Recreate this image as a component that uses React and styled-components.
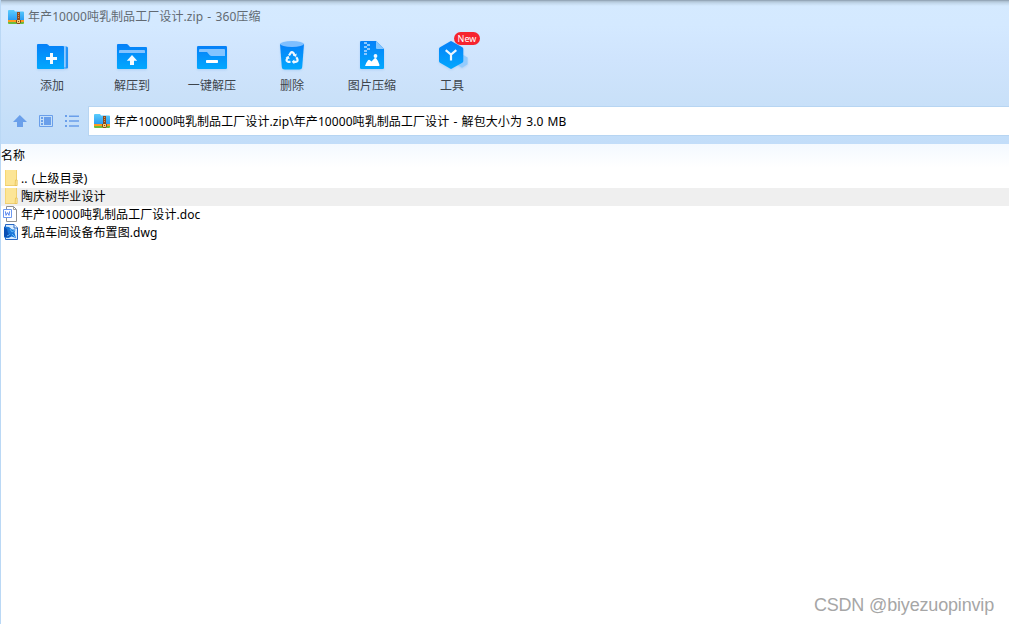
import React from "react";
import styled, { createGlobalStyle } from "styled-components";

const tools = [
  { label: "添加", icon: AddIcon },
  { label: "解压到", icon: ExtractIcon },
  { label: "一键解压", icon: QuickExtractIcon },
  { label: "删除", icon: TrashIcon },
  { label: "图片压缩", icon: ImageZipIcon },
  { label: "工具", icon: CubeIcon, badge: "New" },
];

const files = [
  { name: ".. (上级目录)", icon: FolderIcon },
  { name: "陶庆树毕业设计", icon: FolderIcon, active: true },
  { name: "年产10000吨乳制品工厂设计.doc", icon: DocIcon },
  { name: "乳品车间设备布置图.dwg", icon: DwgIcon },
];

const App = () => {
  return (
    <Window>
      <GlobalStyle />
      <Gradients />
      <Header>
        <TitleBar>
          <ArchiveIcon />
          <span>年产10000吨乳制品工厂设计.zip - 360压缩</span>
        </TitleBar>
        <Toolbar>
          {tools.map(({ label, icon: Icon, badge }) => (
            <Tool key={label}>
              <Icon />
              <span>{label}</span>
              {badge && <Badge>{badge}</Badge>}
            </Tool>
          ))}
        </Toolbar>
        <AddressBar>
          <NavButtons>
            <UpIcon />
            <PreviewIcon />
            <ListIcon />
          </NavButtons>
          <Address>
            <ArchiveIcon />
            <AddressText>
              年产10000吨乳制品工厂设计.zip\年产10000吨乳制品工厂设计 -
              解包大小为 3.0 MB
            </AddressText>
          </Address>
        </AddressBar>
      </Header>
      <ColumnHeader>名称</ColumnHeader>
      <FileList>
        {files.map(({ name, icon: Icon, active }) => (
          <FileRow key={name} $active={active}>
            <Icon />
            <span>{name}</span>
          </FileRow>
        ))}
      </FileList>
      <Watermark>CSDN @biyezuopinvip</Watermark>
    </Window>
  );
};

function Gradients() {
  return (
    <HiddenSvg width="0" height="0">
      <defs>
        <linearGradient id="blue" x1="0" y1="0" x2="0" y2="1">
          <stop offset="0" stopColor="#0680f8" />
          <stop offset="1" stopColor="#02a8fe" />
        </linearGradient>
        <linearGradient id="sky" x1="0" y1="0" x2="0" y2="1">
          <stop offset="0" stopColor="#5accfc" />
          <stop offset="1" stopColor="#2b9cf2" />
        </linearGradient>
      </defs>
    </HiddenSvg>
  );
}

function ArchiveIcon() {
  return (
    <svg width="16" height="16" viewBox="0 0 16 16">
      <path d="M0 2q0-1 1-1h5l1 1.5h8q1 0 1 1V11H0z" fill="url(#sky)" />
      <path d="M0 11h16v2H0z" fill="#ff9a1e" />
      <path d="M0 13h16v1q0 1-1 1H1q-1 0-1-1z" fill="#6cbb3c" />
      <path d="M9 3h3v12H9z" fill="#8c4a22" />
      <path d="M10 4h1v1h-1zM10 6h1v1h-1zM10 8h1v1h-1z" fill="#d99a4e" />
      <path d="M8 11h5v3H8z" fill="#8a4919" />
      <path d="M9 11h3v3H9z" fill="#f3cf72" />
      <path d="M10 12h1v1h-1z" fill="#8a4919" />
    </svg>
  );
}

function AddIcon() {
  return (
    <ToolSvg viewBox="0 0 32 32">
      <path d="M28 6.5h2.5Q32 6.5 32 8v19.5q0 1-1 1h-3z" fill="#2393f7" />
      <path d="M27 6h2.8v21.5H27z" fill="#91caff" />
      <path
        d="M1 5q0-1 1-1h8.6q.7 0 1.2.6L13.4 6H27q1 0 1 1v22H2q-1 0-1-1z"
        fill="url(#blue)"
      />
      <path d="M14 13h3v4h4v3h-4v4h-3v-4h-4v-3h4z" fill="#f6fbff" />
    </ToolSvg>
  );
}

function ExtractIcon() {
  return (
    <ToolSvg viewBox="0 0 32 32">
      <path
        d="M1 5q0-1 1-1h8.6q.7 0 1.2.6L14 7h16q1 0 1 1v20q0 1-1 1H2q-1 0-1-1z"
        fill="url(#blue)"
      />
      <path d="M3 13v-2q0-1 1-1h24q1 0 1 1v2z" fill="#84c3ff" />
      <path d="M16 15l5.2 5.7H18V25h-4v-4.3h-3.2z" fill="#f6fbff" />
    </ToolSvg>
  );
}

function QuickExtractIcon() {
  return (
    <ToolSvg viewBox="0 0 32 32">
      <rect x="1" y="6" width="30" height="23" rx="1.3" fill="url(#blue)" />
      <path d="M3 12v-2q0-1 1-1h24q1 0 1 1v6H15.5q-1 0-1.8-.8L11 12z" fill="#83c4ff" />
      <rect x="10" y="20" width="12" height="3" rx=".7" fill="#fff" />
    </ToolSvg>
  );
}

function TrashIcon() {
  return (
    <ToolSvg viewBox="0 0 32 32">
      <path d="M4 4l1.8 23q.2 2.5 3 2.5h14.4q2.8 0 3-2.5L28 4z" fill="url(#blue)" />
      <ellipse cx="16" cy="4" rx="12" ry="2.9" fill="#7fbfff" />
      <g fill="none" stroke="#eef8ff" strokeWidth="2.2">
        <path d="M13 15.5l1.7-2.7q1.2-1.3 2.5 0l1.4 2.3" />
        <path d="M20.4 17.2l1.1 2.2q.5 2.3-1.8 2.5h-2.3" />
        <path d="M14.5 21.9h-2.2q-2.2-.5-1.6-2.5l1.4-2.4" />
      </g>
      <path
        d="M20.7 13.4l-.6 3.5-3.2-1.4zM18.3 19.4v4.8l-2.6-2.4zM9.5 17.2l3.3-1.2.8 3.2z"
        fill="#eef8ff"
      />
    </ToolSvg>
  );
}

function ImageZipIcon() {
  return (
    <ToolSvg viewBox="0 0 32 32">
      <path
        d="M4 2.2Q4 1 5.2 1H20l8 8v18.8q0 1.2-1.2 1.2H5.2Q4 29 4 27.8z"
        fill="url(#blue)"
      />
      <path d="M20 1l8 8h-7q-1 0-1-1z" fill="#85c6ff" />
      <path
        d="M8 2h3v2H8zM11 4h3v2h-3zM8 6h3v2H8zM11 8h3v2h-3zM8 10h3v2H8zM8 13h3v2H8z"
        fill="#8bc8ff"
      />
      <path d="M9 26q1.2-3.6 3-5.8 1-1 2 0l1.5 1.4 2.8-3q1-1 2 0 2.2 2.5 3.2 6.4.1 1-.8 1z" fill="#fff" />
      <circle cx="19.5" cy="16" r="1.9" fill="#eff8ff" />
    </ToolSvg>
  );
}

function CubeIcon() {
  return (
    <ToolSvg viewBox="0 0 32 32">
      <path d="M27 14.8l4.6 2.6v6.8L26 27.8l-5.5-3.2v-6.8z" fill="#93cbfd" />
      <path
        d="M14 1.4q1-.6 2 0l10.3 5.8q1 .6 1 1.8v12q0 1.2-1 1.8L16 28.6q-1 .6-2 0L4 22.8q-1-.6-1-1.8V9q0-1.2 1-1.8z"
        fill="url(#blue)"
      />
      <path
        d="M9.7 10.2l5.3 4.3 5.3-4.3M15 14.5V20.5"
        fill="none"
        stroke="#eaf6ff"
        strokeWidth="2.2"
      />
    </ToolSvg>
  );
}

function UpIcon() {
  return (
    <svg width="16" height="16" viewBox="0 0 16 16">
      <path d="M7.8 2L15 9h-4v5H5V9H1z" fill="#6a9fea" />
    </svg>
  );
}

function PreviewIcon() {
  return (
    <svg width="16" height="16" viewBox="0 0 16 16">
      <path d="M1.5 2.5h13v11h-13z" fill="none" stroke="#6a9fea" />
      <path d="M3 4h2v2H3zM3 7h2v2H3zM3 10h2v2H3zM6 4h7v8H6z" fill="#6a9fea" />
    </svg>
  );
}

function ListIcon() {
  return (
    <svg width="16" height="16" viewBox="0 0 16 16">
      <path
        d="M1 2h2v2H1zM1 7h2v2H1zM1 12h2v2H1zM5 2.5h10V4H5zM5 7.3h10v1.5H5zM5 12.3h10v1.5H5z"
        fill="#6a9fea"
      />
    </svg>
  );
}

function FolderIcon() {
  return (
    <FileSvg viewBox="0 0 16 16">
      <path d="M2 0h12v16H2z" fill="#fce596" />
      <path d="M2 0h1v16H2z" fill="#f7d773" />
      <path d="M13 0h1v10h-1zM2 15h12v1H2z" fill="#efcf70" />
      <path d="M12.5 10h1.7v5.5h-2.1z" fill="#fae6a0" stroke="#e7bd4b" strokeWidth=".7" />
    </FileSvg>
  );
}

function DocIcon() {
  return (
    <FileSvg viewBox="0 0 16 16">
      <path d="M3.5.5h7l3 3v12h-10z" fill="#fff" stroke="#8f8f8f" />
      <path d="M10.5.5v3h3" fill="none" stroke="#9f9f9f" />
      <path d="M.5 3.5h8v8h-8z" fill="#fff" stroke="#6d99f0" />
      <path d="M2.4 5.4l.6 4 1.5-2.8L6 9.400l.6-4" fill="none" stroke="#5584ee" />
    </FileSvg>
  );
}

function DwgIcon() {
  return (
    <FileSvg viewBox="0 0 16 16">
      <path d="M2.500.5h8.500l3.500 3.500v11.500h-12z" fill="#d9edff" stroke="#2767c4" />
      <path d="M11 .5V4h3.500" fill="#f4faff" stroke="#2767c4" />
      <path d="M1 2.500l5 .5 3 2.500 3.500 0-1 3 1.500 5.500-4.500-1.500-3 1.500-4.500-.5z" fill="#1c78da" />
      <path d="M1 3l3 2 1 4 3 3-4 1.500-3-1z" fill="#0c50b4" />
      <path d="M7 5l2 3 3-2M4 12l3-1.500M9 10l3 3" fill="none" stroke="#62b9f7" />
    </FileSvg>
  );
}

const GlobalStyle = createGlobalStyle`
  body {
    margin: 0;
    overflow: hidden;
    font-family: "Noto Sans", "Noto Sans CJK SC", sans-serif;
    font-size: 12px;
    letter-spacing: 0.08px;
    word-spacing: 1px;
    color: #000;
  }

  * {
    box-sizing: border-box;
  }

  svg {
    display: block;
    flex-shrink: 0;
  }
`;

const HiddenSvg = styled.svg`
  position: absolute;
`;

const Window = styled.main`
  position: relative;
  display: flex;
  flex-direction: column;
  width: 100%;
  height: 100vh;
  border-left: 1px solid #bad8f5;
  background: #fff;
  line-height: 18px;
  white-space: nowrap;
`;

const Header = styled.header`
  height: 144px;
  background:
    linear-gradient(#96a8b9 0 1px, #a9bccd 1px, #c1d6e9 3px, transparent 6px),
    linear-gradient(#d5eaff, #d4e9ff 25px, #cfe4fd 60px, #cae1f9 95px, #c5dff9 120px, #c2ddf9);
`;

const TitleBar = styled.div`
  display: flex;
  align-items: center;
  gap: 4px;
  height: 33px;
  padding-left: 7px;
  color: #626a72;
`;

const Toolbar = styled.nav`
  display: flex;
  height: 73px;
  padding-left: 11px;
`;

const Tool = styled.div`
  position: relative;
  display: flex;
  flex-direction: column;
  align-items: center;
  gap: 5px;
  width: 80px;
  padding-top: 7px;
  color: #3e454c;
`;

const ToolSvg = styled.svg`
  width: 32px;
  height: 32px;
  overflow: visible;
  filter: drop-shadow(0 1px 1px rgba(60, 140, 220, 0.2));
`;

const Badge = styled.span`
  position: absolute;
  top: -1px;
  left: 42px;
  width: 26px;
  height: 13px;
  border-radius: 7px;
  background: #f6242e;
  color: #fff;
  font-size: 9px;
  line-height: 13px;
  text-align: center;
`;

const AddressBar = styled.div`
  display: flex;
  height: 30px;
`;

const NavButtons = styled.div`
  display: flex;
  align-items: center;
  gap: 10px;
  width: 87px;
  padding-left: 11px;
`;

const Address = styled.div`
  display: flex;
  flex: 1;
  align-items: center;
  gap: 4px;
  padding-left: 5px;
  border: 1px solid #b7d5f2;
  border-right: 0;
  background: #fff;
`;

const AddressText = styled.span`
  padding-top: 2px;
`;

const ColumnHeader = styled.div`
  height: 26px;
  padding-top: 3px;
  background: linear-gradient(#f3f9ff, #fff 24px);
`;

const FileList = styled.div`
  display: flex;
  flex-direction: column;
`;

const FileRow = styled.div`
  display: flex;
  align-items: center;
  gap: 2px;
  height: 18px;
  padding-left: 2px;
  background: ${(props) => (props.$active ? "#efefef" : "transparent")};

  svg {
    margin-bottom: 2px;
  }
`;

const FileSvg = styled.svg`
  width: 16px;
  height: 16px;
`;

const Watermark = styled.div`
  position: absolute;
  right: 15px;
  bottom: 8px;
  color: #a6a6a6;
  font-family: "Liberation Sans", sans-serif;
  font-size: 18px;
  letter-spacing: -0.17px;
  word-spacing: 0;
  line-height: 22px;
`;

export default App;
